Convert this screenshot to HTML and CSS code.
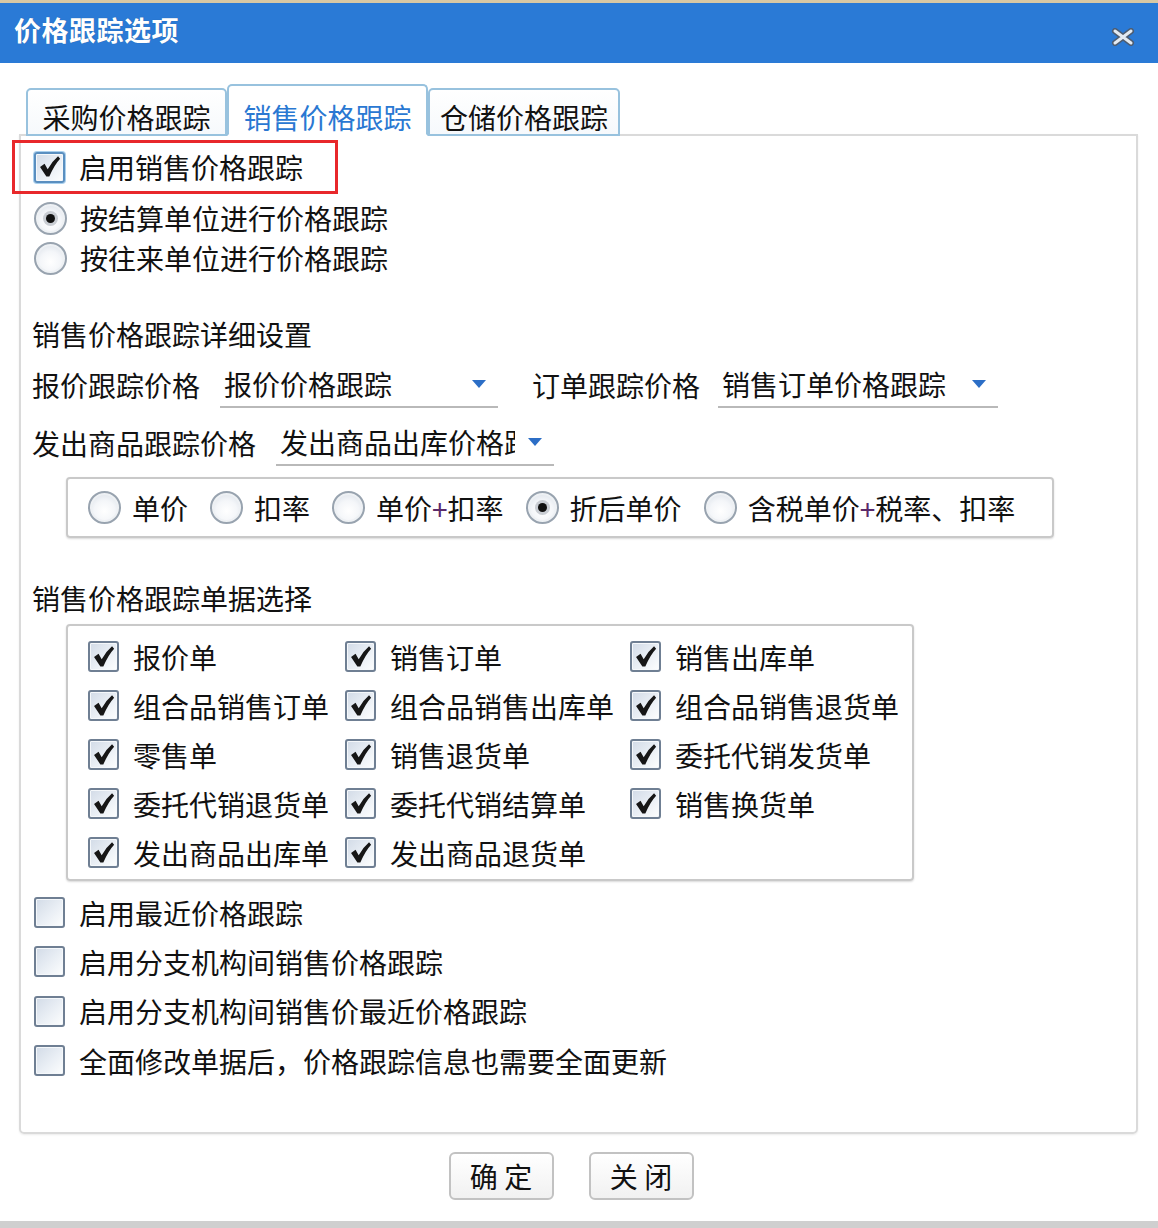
FILE: index.html
```html
<!DOCTYPE html>
<html lang="zh-CN">
<head>
  <meta charset="UTF-8">
  <title>价格跟踪选项</title>
  <link rel="stylesheet" href="styles.css">
</head>
<body>
  <svg class="defs" width="0" height="0">
    <symbol id="ck" viewBox="0 0 30 30">
      <path d="M4.5 15 L9.5 11.5 L13 17.5 Q17.5 9 24.5 3 L26.8 5.8 Q20.5 12.5 14.8 25.5 L11.5 25.5 Z" fill="#161616"/>
    </symbol>
  </svg>

  <div class="dialog">
    <div class="dialog-title">
      <span class="title-text">价格跟踪选项</span>
      <span class="close-btn">
        <svg width="24" height="18" viewBox="0 0 24 18">
          <path d="M4 3 L20 15 M20 3 L4 15" stroke="#4d5d72" stroke-width="6" stroke-linecap="round"/>
          <path d="M4 3 L20 15 M20 3 L4 15" stroke="#e3eaf2" stroke-width="3" stroke-linecap="round"/>
        </svg>
      </span>
    </div>

    <div class="dialog-body">
      <div class="tabs">
        <div class="tab">采购价格跟踪</div>
        <div class="tab active">销售价格跟踪</div>
        <div class="tab tab-narrow">仓储价格跟踪</div>
      </div>

      <div class="tab-panel">
        <!-- 启用 -->
        <div class="row row-enable mark">
          <span class="chk focus"><svg><use href="#ck"/></svg></span>启用销售价格跟踪
        </div>
        <div class="row">
          <span class="radio checked"></span>按结算单位进行价格跟踪
        </div>
        <div class="row">
          <span class="radio"></span>按往来单位进行价格跟踪
        </div>

        <!-- 详细设置 -->
        <div class="row heading">销售价格跟踪详细设置</div>
        <div class="select-row">
          <span class="sel-label">报价跟踪价格</span>
          <div class="select"><span class="sel-text">报价价格跟踪</span><span class="arrow"></span></div>
          <span class="sel-label second">订单跟踪价格</span>
          <div class="select wide"><span class="sel-text">销售订单价格跟踪</span><span class="arrow"></span></div>
        </div>
        <div class="select-row">
          <span class="sel-label">发出商品跟踪价格</span>
          <div class="select"><span class="sel-text">发出商品出库价格跟踪</span><span class="arrow"></span></div>
        </div>

        <div class="price-box">
          <label class="opt"><span class="radio"></span>单价</label>
          <label class="opt"><span class="radio"></span>扣率</label>
          <label class="opt"><span class="radio"></span>单价<span class="plus">+</span>扣率</label>
          <label class="opt"><span class="radio checked"></span>折后单价</label>
          <label class="opt"><span class="radio"></span>含税单价<span class="plus">+</span>税率、扣率</label>
        </div>

        <!-- 单据选择 -->
        <div class="row heading heading-2">销售价格跟踪单据选择</div>
        <div class="bill-box">
          <div class="bill"><span class="chk"><svg><use href="#ck"/></svg></span>报价单</div>
          <div class="bill"><span class="chk"><svg><use href="#ck"/></svg></span>销售订单</div>
          <div class="bill"><span class="chk"><svg><use href="#ck"/></svg></span>销售出库单</div>
          <div class="bill"><span class="chk"><svg><use href="#ck"/></svg></span>组合品销售订单</div>
          <div class="bill"><span class="chk"><svg><use href="#ck"/></svg></span>组合品销售出库单</div>
          <div class="bill"><span class="chk"><svg><use href="#ck"/></svg></span>组合品销售退货单</div>
          <div class="bill"><span class="chk"><svg><use href="#ck"/></svg></span>零售单</div>
          <div class="bill"><span class="chk"><svg><use href="#ck"/></svg></span>销售退货单</div>
          <div class="bill"><span class="chk"><svg><use href="#ck"/></svg></span>委托代销发货单</div>
          <div class="bill"><span class="chk"><svg><use href="#ck"/></svg></span>委托代销退货单</div>
          <div class="bill"><span class="chk"><svg><use href="#ck"/></svg></span>委托代销结算单</div>
          <div class="bill"><span class="chk"><svg><use href="#ck"/></svg></span>销售换货单</div>
          <div class="bill"><span class="chk"><svg><use href="#ck"/></svg></span>发出商品出库单</div>
          <div class="bill"><span class="chk"><svg><use href="#ck"/></svg></span>发出商品退货单</div>
        </div>

        <div class="extra">
          <div class="row-extra"><span class="chk"></span>启用最近价格跟踪</div>
          <div class="row-extra"><span class="chk"></span>启用分支机构间销售价格跟踪</div>
          <div class="row-extra"><span class="chk"></span>启用分支机构间销售价最近价格跟踪</div>
          <div class="row-extra"><span class="chk"></span>全面修改单据后，价格跟踪信息也需要全面更新</div>
        </div>
      </div>

      <div class="dialog-footer">
        <button class="btn">确 定</button>
        <button class="btn">关 闭</button>
      </div>
    </div>
  </div>
</body>
</html>
```

FILE: styles.css
```css
body {
  margin: 0;
  background: #cfcfcf;
  font-family: "Noto Sans CJK SC", "Noto Sans", sans-serif;
  color: #111;
}

.defs {
  position: absolute;
}

.dialog {
  width: 1158px;
  height: 1221px;
  background: #fff;
}

.dialog-title {
  height: 60px;
  border-top: 3px solid #d8c8a4;
  background: #2a7ad6;
  display: flex;
  align-items: center;
  justify-content: space-between;
  padding: 0 23px 0 14px;
  color: #fff;
}

.title-text {
  font-size: 27px;
  font-weight: bold;
  letter-spacing: 0.5px;
  margin-top: -8px;
  text-shadow: 0 0 1px rgba(0,0,0,0.25);
}

.close-btn {
  display: flex;
  margin-top: 8px;
}

.dialog-body {
  padding: 21px 20px 0 19px;
}

/* tabs */
.tabs {
  display: flex;
  align-items: flex-end;
  padding-left: 7px;
  margin-bottom: -2px;
  position: relative;
  z-index: 1;
}

.tab {
  box-sizing: border-box;
  width: 201px;
  height: 48px;
  border: 2px solid #98c2de;
  border-radius: 5px 5px 0 0;
  background: linear-gradient(#fff, #f6f9fc);
  display: flex;
  align-items: flex-end;
  justify-content: center;
  font-size: 28px;
  line-height: 34px;
  color: #111;
}

.tab.active {
  height: 52px;
  border-bottom-color: #fff;
  background: #fff;
  color: #2a78d2;
}

.tab-narrow {
  width: 192px;
}

.tab-panel {
  border: 2px solid #dadada;
  border-radius: 0 0 5px 5px;
  box-shadow: 0 1px 2px rgba(0,0,0,0.08);
  padding: 12px 13px 47px;
  font-size: 28px;
}

.row {
  display: flex;
  align-items: center;
  height: 40px;
}

.row-enable {
  height: 38px;
  margin-bottom: 12px;
}

.mark {
  position: relative;
}

.mark::before {
  content: "";
  position: absolute;
  left: -22px;
  top: -8px;
  width: 320px;
  height: 48px;
  border: 3px solid #e8282b;
}

.heading {
  margin-top: 36px;
  margin-left: -2px;
}

.heading-2 {
  margin-top: 40px;
}

/* checkbox / radio */
.chk {
  box-sizing: border-box;
  flex: none;
  width: 31px;
  height: 31px;
  margin-right: 14px;
  border: 2px solid #6f7f93;
  border-radius: 3px;
  background: linear-gradient(135deg, #d2dbe7 0%, #eaeff5 55%, #fdfefe 100%);
  box-shadow: inset 0 0 0 1px #f5f8fb;
  display: flex;
  align-items: center;
  justify-content: center;
}

.chk svg {
  width: 28px;
  height: 28px;
}

.chk.focus {
  border-color: #5a8fc0;
  box-shadow: inset 0 0 0 1px #f5f8fb, 0 0 0 1px #a9d0ee;
}

.radio {
  box-sizing: border-box;
  flex: none;
  width: 33px;
  height: 33px;
  margin-right: 13px;
  border-radius: 50%;
  border: 2px solid #98a3af;
  background: radial-gradient(circle at 50% 62%, #ffffff 0%, #f4f6f9 45%, #d3dae3 100%);
  box-shadow: inset 0 0 0 2px #eef1f4;
  display: inline-flex;
  align-items: center;
  justify-content: center;
}

.radio.checked::after {
  content: "";
  width: 9px;
  height: 9px;
  border-radius: 50%;
  background: #111;
  box-shadow: 0 0 0 3px #c9cdd3;
}

/* selects */
.select-row {
  display: flex;
  align-items: center;
  height: 46px;
  margin-top: 8px;
  margin-left: -2px;
}

.select-row + .select-row {
  margin-top: 12px;
}

.sel-label {
  margin-right: 20px;
}

.sel-label.second {
  margin-left: 34px;
  margin-right: 18px;
}

.select {
  box-sizing: border-box;
  width: 278px;
  height: 46px;
  border-bottom: 2px solid #b9b9b9;
  display: flex;
  align-items: center;
  padding: 0 12px 0 4px;
}

.select.wide {
  width: 280px;
}

.sel-text {
  flex: 1;
  overflow: hidden;
  white-space: nowrap;
  margin-right: 13px;
}

.arrow {
  flex: none;
  width: 0;
  height: 0;
  border-left: 7px solid transparent;
  border-right: 7px solid transparent;
  border-top: 8px solid #2c6ec6;
}

.price-box {
  box-sizing: border-box;
  width: 988px;
  height: 61px;
  margin: 11px 0 0 32px;
  border: 2px solid #c9c9c9;
  border-radius: 4px;
  box-shadow: 0 1px 2px rgba(0,0,0,0.15);
  display: flex;
  align-items: center;
  gap: 22px;
  padding-left: 20px;
}

.opt {
  display: flex;
  align-items: center;
}

.opt .radio {
  margin-right: 11px;
}

.plus {
  color: #5a2a6a;
}

.bill-box {
  box-sizing: border-box;
  width: 848px;
  height: 257px;
  margin: 6px 0 0 32px;
  border: 2px solid #c9c9c9;
  border-radius: 4px;
  box-shadow: 0 1px 2px rgba(0,0,0,0.15);
  padding: 6px 0 0 20px;
  display: grid;
  grid-template-columns: 257px 285px 1fr;
  grid-auto-rows: 49px;
}

.bill {
  display: flex;
  align-items: center;
  white-space: nowrap;
}

.extra {
  margin-top: 7px;
}

.row-extra {
  display: flex;
  align-items: center;
  height: 49.3px;
}

/* footer */
.dialog-footer {
  display: flex;
  justify-content: center;
  gap: 35px;
  padding: 18px 15px 0 0;
}

.btn {
  width: 105px;
  height: 48px;
  border: 2px solid #c2c2c2;
  border-radius: 6px;
  background: linear-gradient(#ffffff, #f1f1f1);
  font-family: "Noto Sans CJK SC", "Noto Sans", sans-serif;
  font-size: 28px;
  color: #111;
  padding: 0;
  line-height: 44px;
}
```
